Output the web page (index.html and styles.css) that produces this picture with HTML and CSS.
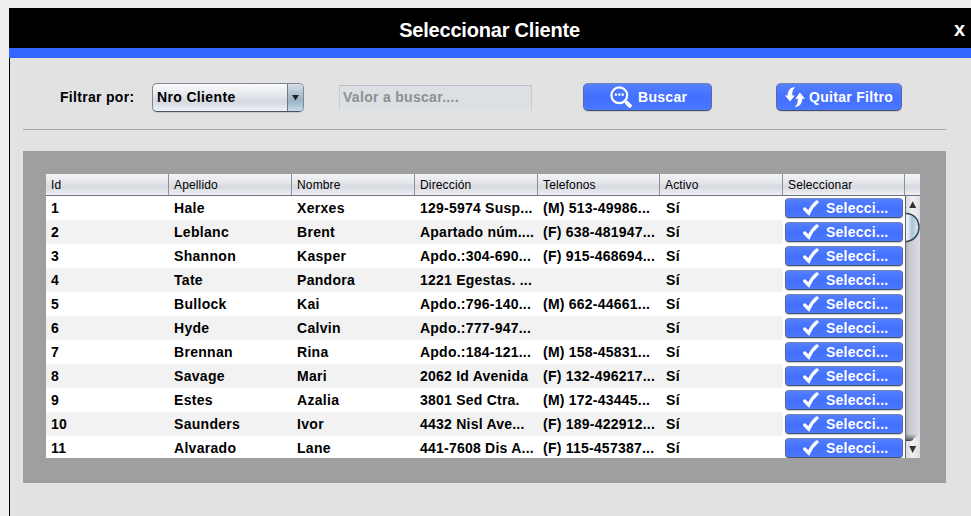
FILE: index.html
```html
<!DOCTYPE html>
<html lang="es">
<head>
<meta charset="utf-8">
<title>Seleccionar Cliente</title>
<link rel="stylesheet" href="styles.css">
</head>
<body>
<svg class="defs" aria-hidden="true">
  <symbol id="check" viewBox="0 0 16 16"><path d="M1.700 9 5.800 13 Q8.400 6.500 13.900 2" fill="none" stroke="#fff" stroke-width="3.300" stroke-linecap="round" stroke-linejoin="miter"/></symbol>
</svg>
<div class="window">
  <header class="titlebar"><h1>Seleccionar Cliente</h1><button class="close" type="button">x</button></header>
  <main class="content">
    <div class="filters">
      <span class="label">Filtrar por:</span>
      <div class="combo"><span>Nro Cliente</span><i class="combo-arrow"><svg width="7" height="6" viewBox="0 0 7 6"><path d="M0 0H7L3.5 5.5Z" fill="#1e242b"/></svg></i></div>
      <div class="field">Valor a buscar....</div>
      <button class="btn search" type="button"><svg width="22" height="22" viewBox="0 0 22 22"><circle cx="9.3" cy="9.3" r="7.900" fill="none" stroke="#fff" stroke-width="2.200"/><path d="M15 15 L17 17" stroke="#fff" stroke-width="2.200"/><path d="M16.200 16.200 L21 21" stroke="#fff" stroke-width="3.800"/><path d="M4.800 7.500h2.200v2.200h-2.200zM8.200 7.500h2.200v2.200h-2.200zM11.600 7.500h2.200v2.200h-2.200z" fill="#fff"/></svg><span>Buscar</span></button>
      <button class="btn reset" type="button"><svg width="20" height="20" viewBox="0 0 20 20"><path d="M10.200 0.300C5.500 0 2.800 3.500 2.600 8.400H0L5.100 14.600 9.800 8.400H7.300C7 5 7.600 2.300 10.200.3Z" fill="#fff"/><path d="M9.700 19.800C14.500 20 17.100 16.600 17.300 11.700H20L14.900 5.500 10.200 11.700H12.700C13 15 12.300 17.800 9.700 19.800Z" fill="#fff"/></svg><span>Quitar Filtro</span></button>
    </div>
    <section class="panel">
      <div class="table">
        <div class="row head"><span>Id</span><span>Apellido</span><span>Nombre</span><span>Dirección</span><span>Telefonos</span><span>Activo</span><span>Seleccionar</span><span></span></div>
        <div class="viewport">
          <div class="rows">
            <div class="row"><span>1</span><span>Hale</span><span>Xerxes</span><span>129-5974 Susp...</span><span>(M) 513-49986...</span><span>Sí</span><button class="btn pick" type="button"><svg><use href="#check"/></svg>Selecci...</button></div>
            <div class="row"><span>2</span><span>Leblanc</span><span>Brent</span><span>Apartado núm....</span><span>(F) 638-481947...</span><span>Sí</span><button class="btn pick" type="button"><svg><use href="#check"/></svg>Selecci...</button></div>
            <div class="row"><span>3</span><span>Shannon</span><span>Kasper</span><span>Apdo.:304-690...</span><span>(F) 915-468694...</span><span>Sí</span><button class="btn pick" type="button"><svg><use href="#check"/></svg>Selecci...</button></div>
            <div class="row"><span>4</span><span>Tate</span><span>Pandora</span><span>1221 Egestas. ...</span><span></span><span>Sí</span><button class="btn pick" type="button"><svg><use href="#check"/></svg>Selecci...</button></div>
            <div class="row"><span>5</span><span>Bullock</span><span>Kai</span><span>Apdo.:796-140...</span><span>(M) 662-44661...</span><span>Sí</span><button class="btn pick" type="button"><svg><use href="#check"/></svg>Selecci...</button></div>
            <div class="row"><span>6</span><span>Hyde</span><span>Calvin</span><span>Apdo.:777-947...</span><span></span><span>Sí</span><button class="btn pick" type="button"><svg><use href="#check"/></svg>Selecci...</button></div>
            <div class="row"><span>7</span><span>Brennan</span><span>Rina</span><span>Apdo.:184-121...</span><span>(M) 158-45831...</span><span>Sí</span><button class="btn pick" type="button"><svg><use href="#check"/></svg>Selecci...</button></div>
            <div class="row"><span>8</span><span>Savage</span><span>Mari</span><span>2062 Id Avenida</span><span>(F) 132-496217...</span><span>Sí</span><button class="btn pick" type="button"><svg><use href="#check"/></svg>Selecci...</button></div>
            <div class="row"><span>9</span><span>Estes</span><span>Azalia</span><span>3801 Sed Ctra.</span><span>(M) 172-43445...</span><span>Sí</span><button class="btn pick" type="button"><svg><use href="#check"/></svg>Selecci...</button></div>
            <div class="row"><span>10</span><span>Saunders</span><span>Ivor</span><span>4432 Nisl Ave...</span><span>(F) 189-422912...</span><span>Sí</span><button class="btn pick" type="button"><svg><use href="#check"/></svg>Selecci...</button></div>
            <div class="row"><span>11</span><span>Alvarado</span><span>Lane</span><span>441-7608 Dis A...</span><span>(F) 115-457387...</span><span>Sí</span><button class="btn pick" type="button"><svg><use href="#check"/></svg>Selecci...</button></div>
          </div>
          <svg class="scrollbar" width="15" height="262" viewBox="0 0 15 262">
            <defs>
              <linearGradient id="track"><stop offset="0" stop-color="#a9abb1"/><stop offset=".3" stop-color="#c8cad0"/><stop offset="1" stop-color="#dadce1"/></linearGradient>
              <linearGradient id="cap"><stop offset="0" stop-color="#d2d5da"/><stop offset=".5" stop-color="#f0f1f3"/><stop offset="1" stop-color="#dddfe4"/></linearGradient>
              <linearGradient id="thumb"><stop offset="0" stop-color="#f4f8fb"/><stop offset=".25" stop-color="#dce9f1"/><stop offset=".5" stop-color="#acc4d5"/><stop offset="1" stop-color="#d8edf8"/></linearGradient>
              <linearGradient id="shade" x2="0" y2="1"><stop offset="0" stop-color="#333" stop-opacity="0"/><stop offset="1" stop-color="#333" stop-opacity=".8"/></linearGradient>
            </defs>
            <rect width="15" height="262" fill="url(#track)"/>
            <path d="M0 0H15V28H0Z" fill="url(#cap)"/>
            <path d="M0 238H12L6 245H0Z" fill="url(#shade)"/>
            <path d="M0 244.500H4Q12 244 15 236V262H0Z" fill="url(#cap)"/>
            <path d="M0 244.500H4Q6 244.500 8 243.500" fill="none" stroke="#444" stroke-width="1"/>
            <path d="M0 17.500H2C18 19 18 43 2 45.500H0Z" fill="url(#thumb)" stroke="#34424e" stroke-width="1.400"/>
            <path d="M4.200 12 7.700 5.200 11.200 12ZM4.200 250H11.200L7.700 257Z" fill="#333"/>
            <path d="M.5 0V262" stroke="#64676c"/>
          </svg>
        </div>
      </div>
    </section>
  </main>
</div>
</body>
</html>
```
FILE: styles.css
```css
* { box-sizing: border-box; }
body {
  margin: 0;
  height: 516px;
  padding: 8px 0 0 9px;
  overflow: hidden;
  background: #efefef;
  font: bold 14px/17px "Liberation Sans", Arial, sans-serif;
  color: #000;
}
.defs { position: absolute; width: 0; height: 0; }
button { margin: 0; padding: 0; border: 0; font: inherit; color: #fff; }
svg { display: block; flex: none; }
.window { height: 508px; background: #e2e2e2; }
.titlebar {
  display: grid;
  grid-template-columns: 57px 1fr 57px;
  align-items: center;
  height: 50px;
  border-bottom: 10px solid #3366ff;
  background: #000;
  color: #fff;
}
h1 { grid-column: 2; margin: 4px 0 0; padding-right: 1px; text-align: center; font-size: 20px; line-height: 24px; letter-spacing: -.2px; }
.close { justify-self: end; margin: 1px 6px 0 0; background: none; font-size: 20px; line-height: 20px; }
.content { height: 458px; padding: 0 25px 0 13px; border-left: 1px solid #000; }
.filters { display: flex; height: 72px; padding: 25px 0 0 37px; border-bottom: 1px solid #a2a5ae; }
.label { width: 92px; padding-top: 6px; letter-spacing: .3px; }
.combo {
  display: flex;
  justify-content: space-between;
  width: 152px;
  height: 29px;
  border: 1px solid #7f8792;
  border-bottom-color: #485566;
  border-radius: 5px;
  background: linear-gradient(#fafafc, #e1e4e9 45%, #d4d8df 65%, #eef1f5);
  box-shadow: 0 1px 1px #c5c7ca;
  overflow: hidden;
}
.combo span { padding: 5px 0 0 4px; letter-spacing: .35px; }
.combo-arrow {
  display: flex;
  align-items: center;
  justify-content: center;
  width: 16px;
  border-left: 1px solid #6b7c91;
  background: linear-gradient(#d5dee8, #a5b8ca 50%, #a0b5c9 65%, #c7dbe9);
}
.field {
  width: 193px;
  height: 26px;
  margin: 2px 51px 0 35px;
  padding: 3px 0 0 3px;
  border: 1px solid #c8ccd2;
  border-top-color: #babec4;
  border-bottom-color: #e0e2e5;
  background: #dcdfe4;
  color: #8e8f91;
  letter-spacing: .3px;
}
.btn {
  display: flex;
  align-items: center;
  border: 1px solid #5c67a0;
  border-top-color: #7482b4;
  border-bottom-color: #4a4f66;
  border-radius: 5px;
  background: linear-gradient(#5580ff, #4571ff 45%, #4370ff 60%, #4b79ff);
  box-shadow: 0 1px 1px #c9cacf;
  letter-spacing: .3px;
}
.search, .reset { height: 28px; }
.search { width: 129px; padding-left: 26px; gap: 6px; }
.reset { width: 126px; margin-left: 64px; padding-left: 8px; gap: 4px; }
.panel { height: 332px; margin-top: 21px; padding: 23px 26px 25px 23px; background: #9f9f9f; }
.table { width: 874px; height: 284px; background: #fff; }
.row { display: grid; grid-template-columns: 123px 123px 123px 123px 122px 123px 122px 15px; height: 24px; }
.row > span { padding: 4px 0 0 5px; white-space: nowrap; letter-spacing: .3px; }
.rows .row > span:nth-child(4), .rows .row > span:nth-child(5) { letter-spacing: .23px; }
.rows .row > span:nth-child(6) { padding-left: 6px; }
.head {
  height: 22px;
  border-bottom: 1px solid #6f757e;
  background: linear-gradient(#f3f4f7, #e3e4e9 45%, #d7d9e0 60%, #eef0f4);
  font-weight: normal;
  font-size: 12px;
  line-height: 14px;
}
.row.head > span { border-right: 1px solid #8b9099; letter-spacing: .15px; }
.row.head > span:last-child { border-right: 0; }
.viewport { display: flex; height: 262px; overflow: hidden; }
.rows { width: 859px; }
.rows .row { grid-template-columns: 123px 123px 123px 123px 122px 123px 122px; }
.rows .row:nth-child(even) { background: linear-gradient(90deg, #f2f2f2 737px, #fff 737px); }
.pick { width: 118px; height: 20px; margin: 2px 0 0 2px; padding-left: 17px; gap: 7px; border-radius: 4px; letter-spacing: .25px; }
.pick svg { width: 16px; height: 16px; }
```
